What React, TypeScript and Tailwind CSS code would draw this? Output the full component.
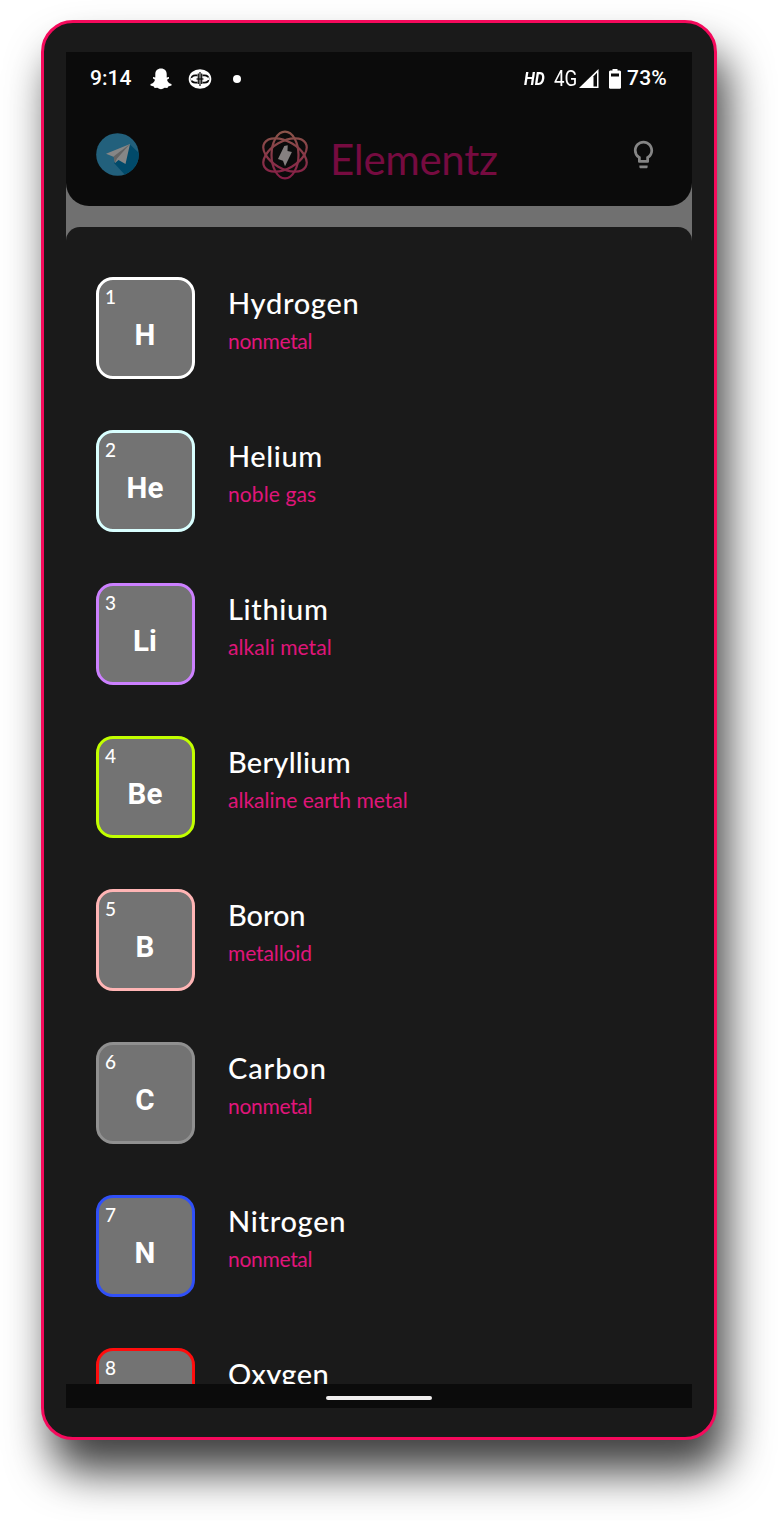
const elements = [
  { n: 1, s: "H", name: "Hydrogen", kind: "nonmetal", border: "border-white", nt: "tracking-[0.7px]", kt: "tracking-[-0.3px]" },
  { n: 2, s: "He", name: "Helium", kind: "noble gas", border: "border-[#d9ffff]", nt: "tracking-[0.6px]", kt: "tracking-[0.1px]" },
  { n: 3, s: "Li", name: "Lithium", kind: "alkali metal", border: "border-[#cc80ff]", nt: "tracking-[0.65px]", kt: "tracking-[0.05px]" },
  { n: 4, s: "Be", name: "Beryllium", kind: "alkaline earth metal", border: "border-[#c2ff00]", nt: "tracking-[0.25px]", kt: "tracking-[0px]" },
  { n: 5, s: "B", name: "Boron", kind: "metalloid", border: "border-[#ffb5b5]", nt: "tracking-[-0.1px]", kt: "tracking-[-0.1px]" },
  { n: 6, s: "C", name: "Carbon", kind: "nonmetal", border: "border-[#909090]", nt: "tracking-[0.9px]", kt: "tracking-[-0.3px]" },
  { n: 7, s: "N", name: "Nitrogen", kind: "nonmetal", border: "border-[#3050f8]", nt: "tracking-[0.7px]", kt: "tracking-[-0.3px]" },
  { n: 8, s: "O", name: "Oxygen", kind: "nonmetal", border: "border-[#ff0d0d]", nt: "tracking-[0.4px]", kt: "tracking-[-0.3px]" },
];

function StatusBar() {
  return (
    <div className="flex h-[52px] items-center pl-[24px] pr-[25px] pt-[1px] font-['Roboto',sans-serif] text-[21px] font-medium leading-none text-white">
      <span className="w-[60px]">9:14</span>
      <svg className="h-[22px] w-[22px]" viewBox="0 0 22 22" fill="#fff">
        <path d="M11 .5c3.700 0 5.700 2.300 5.700 5.600v3.300l2.300-.3v1.400l-2 1.200c.6 2.300 2 3.700 4.500 4.400v1.500l-3.300 1-.8 1.300-2.800-.1c-1.200.7-2.300 1.400-3.600 1.400s-2.400-.7-3.600-1.400l-2.800.1-.8-1.300-3.300-1v-1.500c2.500-.7 3.900-2.100 4.500-4.400l-2-1.200V9.100l2.300.3V6.100C5.300 2.800 7.300.5 11 .5z" />
      </svg>
      <svg className="ml-[16px] h-[22px] w-[24px]" viewBox="0 0 24 22" fill="none">
        <ellipse cx="12" cy="11" rx="11.300" ry="9.800" fill="#fff" />
        <path d="M9.500 7.300H7.300C4.500 7.300 3.500 9 3.500 11s1.500 3.700 4 3.700h2M14.500 7.300h2.200c2.800 0 3.800 1.700 3.800 3.700s-1.500 3.700-4 3.700h-2" stroke="#0b0b0b" strokeWidth="1.800" />
        <path d="M10.300 5.500v10.500M13.700 5.500v10.500M12 4v14" stroke="#0b0b0b" strokeWidth="1.200" />
        <path d="M3 11.500l3.500-1M17.500 11.500l3.500-1" stroke="#fff" strokeWidth="2.600" />
        <path d="M8.500 11h7" stroke="#0b0b0b" strokeWidth="1.200" />
      </svg>
      <span className="ml-[21px] h-[8px] w-[8px] rounded-full bg-white" />
      <span className="ml-auto w-[22px] origin-left scale-x-[0.88] text-[18px] font-bold italic">HD</span>
      <span className="ml-[8px] inline-block w-[23px] origin-left scale-x-[0.85] text-[22px] font-normal">4G</span>
      <svg className="ml-[2px] h-[20px] w-[20px]" viewBox="0 0 20 20">
        <path d="M0 19 19.500 0v19z" fill="#fff" />
        <path d="M14.500 7.300l3.500-3.500v13.700h-3.500z" fill="#0b0b0b" />
      </svg>
      <svg className="ml-[10px] h-[20px] w-[12px]" viewBox="0 0 12 20">
        <path d="M3.500 0h5v1.500H11L12 2.500V19l-1 .800H1L0 19V2.500l1-1h2.500z" fill="#fff" />
        <path d="M2 4.500h8v3H2z" fill="#0b0b0b" />
      </svg>
      <span className="ml-[6px] tracking-[0.2px]">73%</span>
    </div>
  );
}

function TelegramIcon() {
  return (
    <svg className="h-[43px] w-[43px]" viewBox="0 0 43 43">
      <defs>
        <clipPath id="disc"><circle cx="21.500" cy="21.500" r="21.300" /></clipPath>
      </defs>
      <g clipPath="url(#disc)">
        <path d="M0 0h43v43H0z" fill="#22607c" />
        <path d="M34 11.500 43 20v23H30L18 30z" fill="#014a6a" />
      </g>
      <path d="M10 20.700 34 11l-4.500 20-7-4-3.500 3-1-6z" fill="#868686" />
      <path d="M17.500 23.500 34 11 21 25.500l-2 4.500z" fill="#646464" />
    </svg>
  );
}

function AtomIcon() {
  return (
    <svg className="h-[50px] w-[46px]" viewBox="0 0 46 50">
      <defs>
        <linearGradient id="orbit" x1="0" y1="0" x2="0" y2="1">
          <stop offset="0" stopColor="#8a564a" />
          <stop offset="1" stopColor="#861b46" />
        </linearGradient>
        <mask id="rings" maskUnits="userSpaceOnUse" x="0" y="0" width="46" height="50">
          <g fill="none" stroke="#fff" strokeWidth="2.200">
            <ellipse cx="23" cy="25" rx="13.500" ry="23.300" />
            <ellipse cx="23" cy="25" rx="13.500" ry="23.800" transform="rotate(60 23 25)" />
            <ellipse cx="23" cy="25" rx="13.500" ry="23.800" transform="rotate(-60 23 25)" />
          </g>
        </mask>
      </defs>
      <rect width="46" height="50" fill="url(#orbit)" mask="url(#rings)" />
      <path d="M22.300 16l3.400-.7-.2 5.700 4.400 1-6.900 14.300-2-5.600-5-1.700z" fill="#858080" />
    </svg>
  );
}

function Header() {
  return (
    <header className="h-[154px] rounded-b-[23px] bg-[#0b0b0b]">
      <StatusBar />
      <div className="flex h-[102px] items-start pl-[30px] pr-[32px] pt-[29px]">
        <TelegramIcon />
        <div className="ml-[123px] -mt-[3px]"><AtomIcon /></div>
        <h1 className="ml-[22px] mt-[1px] text-[42px] leading-[50px] tracking-[-0.300px] text-[#760b40]">Elementz</h1>
        <svg className="ml-auto mt-[5px] h-[33px] w-[33px]" viewBox="0 0 24 24" fill="#858585">
          <path d="M9 21c0 .55.45 1 1 1h4c.55 0 1-.45 1-1v-1H9v1zm3-19C8.140 2 5 5.140 5 9c0 2.380 1.190 4.470 3 5.740V17c0 .55.45 1 1 1h6c.55 0 1-.45 1-1v-2.260c1.810-1.270 3-3.360 3-5.740 0-3.860-3.140-7-7-7zm2.850 11.100l-.85.600V16h-4v-2.300l-.85-.600A4.997 4.997 0 0 1 7 9c0-2.760 2.240-5 5-5s5 2.240 5 5c0 1.630-.8 3.160-2.150 4.100z" />
        </svg>
      </div>
    </header>
  );
}

function ElementRow({ item }: { item: (typeof elements)[number] }) {
  return (
    <li className="flex h-[153px] shrink-0 items-start">
      <div className={`relative flex h-[102px] w-[99px] items-center justify-center rounded-[17px] border-[3px] bg-[#737373] ${item.border}`}>
        <span className="absolute left-[6px] top-[6px] text-[19px] font-medium leading-[22px]">{item.n}</span>
        <span className="mt-[13px] mr-[1px] font-['Roboto',sans-serif] text-[29.500px] font-bold leading-[36px]">{item.s}</span>
      </div>
      <div className="ml-[33px] pt-[6px]">
        <h2 className={`whitespace-nowrap text-[29px] font-medium leading-[40px] ${item.nt}`}>{item.name}</h2>
        <p className={`whitespace-nowrap text-[21px] leading-[36px] text-[#e0157a] ${item.kt}`}>{item.kind}</p>
      </div>
    </li>
  );
}

export default function App() {
  return (
    <div className="h-[1521px] w-[778px] overflow-hidden bg-white pl-[41px] pt-[20px] font-['Lato',sans-serif] text-white">
      <div className="h-[1420px] w-[676px] rounded-[32px] border-[3px] border-[#f50a5c] bg-[#1a1a1a] pl-[22px] pt-[29px] shadow-[10px_32px_44px_rgba(0,0,0,0.75)]">
        <div className="flex h-[1356px] w-[626px] flex-col bg-[#707070]">
          <Header />
          <div className="mt-[21px] min-h-0 flex-1 overflow-hidden rounded-t-[14px] bg-[#1a1a1a]">
            <ul className="flex flex-col pl-[30px] pt-[50px]">
              {elements.map((item) => <ElementRow key={item.n} item={item} />)}
            </ul>
          </div>
          <div className="flex h-[24px] justify-center bg-[#0b0b0b] pt-[12px]">
            <div className="h-[4px] w-[106px] rounded-full bg-[#f0eeee]" />
          </div>
        </div>
      </div>
    </div>
  );
}
